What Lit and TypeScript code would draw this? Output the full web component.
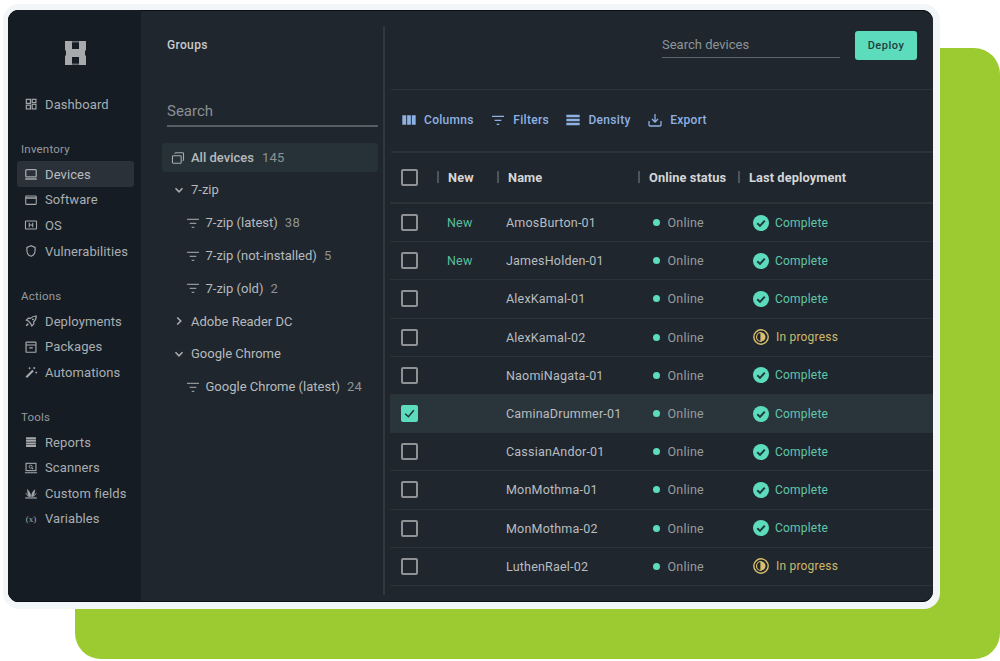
import { LitElement, html, css, svg } from "lit";
import { customElement } from "lit/decorators.js";

const ic = (body: unknown, cls = "ico") => html`<svg class=${cls} viewBox="0 0 24 24" fill="none" stroke="currentColor" stroke-width="2">${body}</svg>`;

const icons: Record<string, unknown> = {
  dashboard: svg`<rect x="4" y="4" width="7" height="7" stroke-width="2"/><rect x="14" y="4" width="6.500" height="5.500" stroke-width="2"/><rect x="4" y="14" width="7" height="6.500" stroke-width="2"/><rect x="14" y="12.500" width="6.500" height="8" stroke-width="2"/>`,
  devices: svg`<rect x="3" y="4.500" width="18" height="12.500" rx="1.500" stroke-width="2.200"/><path d="M2 20.500h20" stroke-width="2.600"/>`,
  software: svg`<rect x="3" y="5" width="18" height="14.500" rx="1" stroke-width="1.800"/><path d="M3 8.500h18" stroke-width="2.800"/>`,
  os: svg`<rect x="2.500" y="5" width="19" height="14" rx="1" stroke-width="1.800"/><path d="M9 8v8M15 8v8M9 12h6" stroke-width="1.800"/>`,
  shield: svg`<path d="M12 3 5 5.800v5.700c0 4.500 3 8.100 7 9.500 4-1.400 7-5 7-9.500V5.800z" stroke-width="2"/>`,
  rocket: svg`<path d="M8 12.500 4 10.500l3.500-3.500 3.500.5C14 4.500 17.500 3.300 21 3.500c.2 3.500-1 7-4.500 10l.5 3.500-3.500 3.500-2-4z" stroke-width="2"/><circle cx="15.300" cy="9.200" r="1.700" fill="currentColor" stroke="none"/><path d="M6.500 16c-1.800.5-3 2.500-3.500 5 2.500-.5 4.500-1.700 5-3.500z" fill="currentColor" stroke="none"/>`,
  packages: svg`<rect x="3.500" y="3.500" width="17" height="17.500" rx="1" stroke-width="2"/><path d="M3.500 8.500h17M9 13.500h6" stroke-width="2"/>`,
  wand: svg`<path d="M4 21 15.500 9.500" stroke-width="3.600"/><path d="M17.500 3.500v3.500M15.800 5.200h3.500M21 11.500v3M19.500 13h3M9.500 4v3M8 5.500h3" stroke-width="1.700"/>`,
  reports: svg`<path d="M3.500 5.500h17M3.500 10h17M3.500 14.500h17M3.500 19h17" stroke-width="3.400"/>`,
  scanners: svg`<rect x="3.500" y="4" width="17" height="12.500" stroke-width="1.900"/><circle cx="11.500" cy="9.800" r="2.600" stroke-width="1.500"/><path d="M13.500 11.800l2.300 2M1.500 20h21" stroke-width="1.800"/>`,
  fields: svg`<path d="M2 20.500h20" stroke-width="2"/><path d="M11.500 18C11.500 14.500 10 10.500 6 6c.2 5 1 9 2 12zM13 18c0-4 1.500-8 5.500-11.500-.3 4.500-1.300 8.500-3 11.500zM2.500 12.500c2.300 1.200 4 3 4.500 5.500M21.500 12.500c-2.300 1.200-3.700 3-4.200 5.500" fill="currentColor" stroke-width="1"/>`,
  chevDown: svg`<path d="M6 9l6 6 6-6" stroke-width="2.800"/>`,
  chevRight: svg`<path d="M9 6l6 6-6 6" stroke-width="2.800"/>`,
  filter: svg`<path d="M3 6.500h18M7 12.500h10M10 18.500h4" stroke-width="2"/>`,
  stack: svg`<rect x="2.500" y="8" width="15" height="13" rx="1.500" stroke-width="1.800"/><path d="M6.500 4.500c0-.8.700-1.500 1.500-1.500h12c.8 0 1.500.700 1.500 1.500V15c0 .8-.700 1.500-1.500 1.500" stroke-width="1.800"/>`,
  columns: svg`<path d="M2 5h5.800v14H2zM9.200 5h5.600v14H9.200zM16.200 5H22v14h-5.800z" fill="currentColor" stroke="none"/>`,
  density: svg`<path d="M2 6h20M2 12h20M2 18h20" stroke-width="3.400"/>`,
  exp: svg`<path d="M12 3v12M7.500 10.500 12 15l4.500-4.500" stroke-width="1.900"/><path d="M3 13.500v6c0 .8.700 1.500 1.500 1.500h15c.8 0 1.500-.700 1.500-1.500v-6" stroke-width="1.900"/>`,
};

const nav = (name: string, icon: string, on = false) => html`<div class="item ${on ? "on" : ""}">${ic(icons[icon])}<span>${name}</span></div>`;

const rows: [string, boolean, boolean, boolean][] = [
  ["AmosBurton-01", true, true, false],
  ["JamesHolden-01", true, true, false],
  ["AlexKamal-01", false, true, false],
  ["AlexKamal-02", false, false, false],
  ["NaomiNagata-01", false, true, false],
  ["CaminaDrummer-01", false, true, true],
  ["CassianAndor-01", false, true, false],
  ["MonMothma-01", false, true, false],
  ["MonMothma-02", false, true, false],
  ["LuthenRael-02", false, false, false],
];

@customElement("app-root")
export class AppRoot extends LitElement {
  static styles = css`
    :host { display: block; position: relative; width: 1000px; height: 661px; overflow: hidden; background: #fff; font-family: Roboto, "Liberation Sans", sans-serif; color: #b6babd; }
    * { box-sizing: border-box; }
    .green { position: absolute; left: 75px; top: 48px; width: 925px; height: 611px; border-radius: 26px; background: #9bcb30; }
    .frame { position: absolute; left: 3px; top: 4px; width: 937px; height: 605px; padding: 6px 7px 7px 5px; border-radius: 16px; background: #f3f6f9; }
    .card { display: flex; height: 100%; border-radius: 11px; overflow: hidden; background: #1f262d; box-shadow: inset 0 1px 0 #0b0f13, inset 0 -1px 0 #0b0f13; }

    .side { width: 133px; flex: none; padding: 31px 7px 0 9px; background: #151c23; border-bottom: 1px solid #0b0f13; }
    .logo { display: block; width: 23px; height: 24px; margin: 0 0 26.500px 47px; color: #a7a9ab; }
    .item { display: flex; align-items: center; height: 25.600px; padding-left: 7px; gap: 7px; font-size: 13px; letter-spacing: .1px; color: #a9aeb2; border-radius: 3px; }
    .item.on { background: #2a3138; color: #b9bdc0; }
    .ico { width: 14px; height: 14px; flex: none; }
    .item .ico { color: #a5a9ad; }
    .item .x { width: 14px; flex: none; font-size: 9px; letter-spacing: 0; white-space: nowrap; text-align: center; font-family: "Liberation Serif", serif; color: #a5a9ad; }
    .label { height: 20px; line-height: 20px; margin-top: 22.200px; margin-bottom: 2.200px; padding-left: 4px; font-size: 11.500px; letter-spacing: .2px; color: #959a9e; }

    .groups { width: 242px; flex: none; padding: 27px 5px 0 21px; }
    .gt { height: 16px; line-height: 16px; padding-left: 5px; font-size: 12px; font-weight: 500; letter-spacing: .35px; color: #c8cbce; }
    .gs { height: 34px; margin-top: 40px; margin-bottom: 16px; margin-left: 5px; padding-top: 6px; border-bottom: 2px solid #565d63; font-size: 15px; line-height: 24px; color: #8b9094; }
    .node { display: flex; align-items: center; height: 32.800px; font-size: 13px; color: #b6babd; white-space: nowrap; }
    .node .n { color: #8d9296; margin-left: 2px; letter-spacing: .3px; }
    .node .ico { color: #a7abaf; }
    .all { height: 29px; margin-bottom: 1.600px; padding-left: 9px; gap: 6px; background: #263237; border-radius: 3px; font-weight: 500; }
    .all .n { font-weight: 400; }
    .parent { padding-left: 9.500px; gap: 5.500px; }
    .leaf { padding-left: 22.500px; gap: 5px; }
    .leaf .ico { width: 16px; height: 16px; color: #8f9498; }

    .vr { width: 2px; flex: none; margin: 16px 0 7px; background: #30383e; }

    .main { flex: 1; min-width: 0; padding-left: 6px; }
    .top { display: flex; justify-content: flex-end; align-items: flex-start; height: 80px; padding: 21px 16px 0 0; border-bottom: 1px solid #2c343a; }
    .ds { width: 178px; height: 27px; padding-top: 5.500px; font-size: 13px; line-height: 16px; color: #8f9498; border-bottom: 1px solid #5b6268; }
    .deploy { width: 62px; height: 29px; margin-left: 15px; border: 0; border-radius: 3px; background: #5cdcbc; color: #21403f; font: 500 11px Roboto, "Liberation Sans", sans-serif; letter-spacing: .5px; }
    .tools { display: flex; align-items: center; height: 63px; padding: 0 0 2px 10px; gap: 16.500px; border-bottom: 2px solid #2b3238; color: #8fb2e4; font-size: 12px; font-weight: 500; letter-spacing: .3px; }
    .tool { display: flex; align-items: center; gap: 7px; }
    .tool .ico { width: 16px; height: 16px; }

    .row { display: grid; grid-template-columns: 46px 60px 141px 100px 1fr; align-items: center; height: 38.200px; border-bottom: 1px solid #2b3238; font-size: 12.500px; letter-spacing: .2px; margin-left: -1px; padding-left: 1px; }
    .row.head { height: 51px; border-bottom: 2px solid #2b3238; color: #d4d6d8; font-size: 12.800px; font-weight: 700; letter-spacing: .1px; }
    .row.sel { background: #2a343b; }
    .box { display: block; width: 17px; height: 17px; margin-left: 10px; border: 2px solid #8e9295; border-radius: 2px; }
    .box.checked { background: #5cdcbc; border-color: #5cdcbc; }
    .box svg { display: block; width: 13px; height: 13px; color: #20303a; }
    .h { position: relative; display: block; padding-left: 11px; white-space: nowrap; }
    .h::before { content: ""; position: absolute; left: 0; top: 1px; width: 2px; height: 12px; background: #4d545a; }
    .new { color: #5bbf9e; padding-left: 10px; }
    .name { padding-left: 9px; color: #b9bdc0; white-space: nowrap; }
    .on-s { display: flex; align-items: center; gap: 7.500px; padding-left: 15px; color: #969b9f; }
    .dot { width: 7px; height: 7px; border-radius: 50%; background: #5cdcbc; }
    .st { display: flex; align-items: center; gap: 6px; padding-left: 15px; color: #60c8ab; font-size: 12px; }
    .st.p { color: #cdb96c; gap: 7px; }
    .st svg { width: 16px; height: 16px; flex: none; }
  `;

  private box(checked = false) {
    return html`<span class="box ${checked ? "checked" : ""}">${checked ? html`<svg viewBox="0 0 24 24" fill="none" stroke="currentColor" stroke-width="2.800"><path d="M4 12.500 10 18 20 6"/></svg>` : ""}</span>`;
  }

  private status(done: boolean) {
    return done
      ? html`<div class="st"><svg viewBox="0 0 16 16"><circle cx="8" cy="8" r="8" fill="#5cdcbc"/><path d="M4.300 8.300 7 10.900 11.800 5.600" fill="none" stroke="#1f3a3c" stroke-width="2"/></svg><span>Complete</span></div>`
      : html`<div class="st p"><svg viewBox="0 0 16 16"><circle cx="8" cy="8" r="7.200" fill="none" stroke="#d9bf6e" stroke-width="1.400"/><path d="M8 3.500a4.500 4.500 0 0 0 0 9z" fill="none" stroke="#d9bf6e" stroke-width="1.200"/><path d="M8 3.500a4.500 4.500 0 0 1 0 9z" fill="#d9bf6e"/></svg><span>In progress</span></div>`;
  }

  render() {
    return html`
      <div class="green"></div>
      <div class="frame">
        <div class="card">
          <aside class="side">
            <svg class="logo" viewBox="0 0 23 24" fill="currentColor"><path d="M1 0h7v8h7V0h7v8.500l-1 2v3l1 2V24h-7v-8H8v8H1v-8.500l1-2v-3l-1-2z"/><path d="M8 0h7v1.500H8zM8 22.500h7V24H8z" opacity=".55"/></svg>
            ${nav("Dashboard", "dashboard")}
            <div class="label">Inventory</div>
            ${nav("Devices", "devices", true)}
            ${nav("Software", "software")}
            ${nav("OS", "os")}
            ${nav("Vulnerabilities", "shield")}
            <div class="label">Actions</div>
            ${nav("Deployments", "rocket")}
            ${nav("Packages", "packages")}
            ${nav("Automations", "wand")}
            <div class="label">Tools</div>
            ${nav("Reports", "reports")}
            ${nav("Scanners", "scanners")}
            ${nav("Custom fields", "fields")}
            <div class="item"><span class="x">(x)</span><span>Variables</span></div>
          </aside>

          <section class="groups">
            <div class="gt">Groups</div>
            <div class="gs">Search</div>
            <div class="node all">${ic(icons.stack)}<span>All devices</span><span class="n">145</span></div>
            <div class="node parent">${ic(icons.chevDown)}<span>7-zip</span></div>
            <div class="node leaf">${ic(icons.filter)}<span>7-zip (latest)</span><span class="n">38</span></div>
            <div class="node leaf">${ic(icons.filter)}<span>7-zip (not-installed)</span><span class="n">5</span></div>
            <div class="node leaf">${ic(icons.filter)}<span>7-zip (old)</span><span class="n">2</span></div>
            <div class="node parent">${ic(icons.chevRight)}<span>Adobe Reader DC</span></div>
            <div class="node parent">${ic(icons.chevDown)}<span>Google Chrome</span></div>
            <div class="node leaf">${ic(icons.filter)}<span>Google Chrome (latest)</span><span class="n">24</span></div>
          </section>

          <div class="vr"></div>

          <section class="main">
            <div class="top">
              <div class="ds">Search devices</div>
              <button class="deploy">Deploy</button>
            </div>
            <div class="tools">
              <div class="tool">${ic(icons.columns)}<span>Columns</span></div>
              <div class="tool">${ic(icons.filter)}<span>Filters</span></div>
              <div class="tool">${ic(icons.density)}<span>Density</span></div>
              <div class="tool">${ic(icons.exp)}<span>Export</span></div>
            </div>
            <div class="row head">
              ${this.box()}
              <span class="h">New</span>
              <span class="h">Name</span>
              <span class="h">Online status</span>
              <span class="h">Last deployment</span>
            </div>
            ${rows.map(([name, isNew, done, sel]) => html`
              <div class="row ${sel ? "sel" : ""}">
                ${this.box(sel)}
                <span class="new">${isNew ? "New" : ""}</span>
                <span class="name">${name}</span>
                <div class="on-s"><span class="dot"></span><span>Online</span></div>
                ${this.status(done)}
              </div>`)}
          </section>
        </div>
      </div>
    `;
  }
}
